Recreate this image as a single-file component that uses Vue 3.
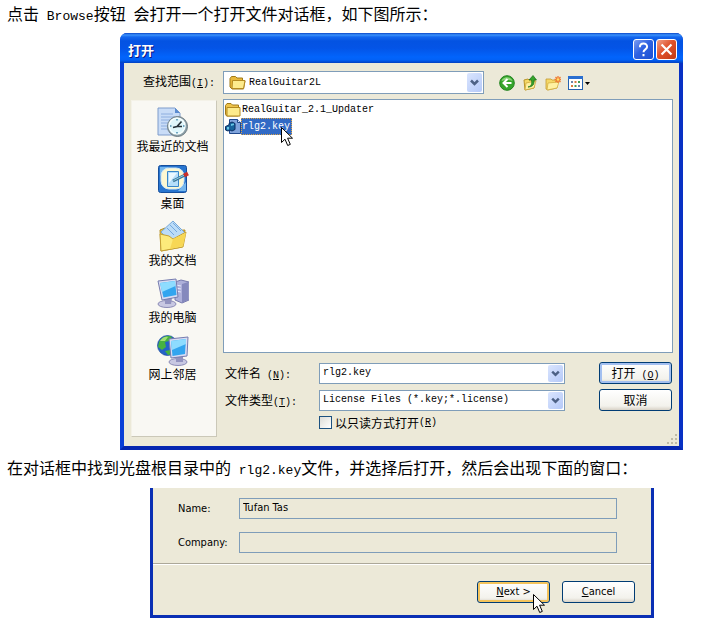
<template>
  <main class="page">
    <p class="note">点击<span class="lat"> Browse</span>按钮<span class="lat">&nbsp;</span>会打开一个打开文件对话框，如下图所示：</p>

    <section class="dialog" aria-label="打开">
      <header class="titlebar">
        <h1>打开</h1>
        <button class="cap help" type="button" aria-label="Help">
          <svg viewBox="0 0 21 21"><path d="M6.500 8c0-5.500 8-5.500 8-.5 0 3-4 2.700-4 6M10.500 15.500v2.500" fill="none" stroke="#fff" stroke-width="2.200" /></svg>
        </button>
        <button class="cap close" type="button" aria-label="Close">
          <svg viewBox="0 0 21 21"><path d="M5 5l11 11M16 5L5 16" stroke="#fff" stroke-width="2.400" /></svg>
        </button>
      </header>

      <div class="body">
        <div class="lookin">
          <label for="folder">查找范围<span class="lat">(<u>I</u>):</span></label>
          <div class="combo look">
            <svg class="folder" viewBox="0 0 17 15">
              <path d="M1 3.500L2.500 1.500h4L8 3h5.500v3H16l-1.500 8H3L1 12z" fill="#e9b93c" stroke="#a17a18" />
              <path d="M3.500 5.500h12.500L14.500 13.500H3z" fill="#fdeb8c" stroke="#b48a20" />
            </svg>
            <select id="folder" v-model="folder">
              <option>RealGuitar2L</option>
            </select>
            <svg class="arrow" viewBox="0 0 15 18"><path d="M4 7l3.500 3.500L11 7" /></svg>
          </div>
          <div class="tools">
            <button type="button" aria-label="Back">
              <svg viewBox="0 0 16 16">
                <circle cx="8" cy="8" r="7.300" fill="#35a52b" stroke="#21821e" />
                <path d="M2.500 6C4 1 12 1 13.500 6 10 4.500 6 4.500 2.500 6z" fill="#8bd579" />
                <path d="M8.500 4L4.500 8l4 4M5 8h7.500" fill="none" stroke="#fff" stroke-width="2" />
              </svg>
            </button>
            <button type="button" aria-label="Up">
              <svg viewBox="0 0 16 16">
                <path d="M2 5l4-1 1 1 6-1-1 9-9 2z" fill="#f5d867" stroke="#b99528" />
                <path d="M4 8l10-2-2 7-9 2z" fill="#fff0a0" stroke="#c7a232" stroke-width=".7" />
                <path d="M6 12c4-1 4-4 3.500-7H7L11 .5 14.500 5H12c.5 4-1 7-6 7z" fill="#35a52b" stroke="#176d18" stroke-width=".7" />
              </svg>
            </button>
            <button type="button" aria-label="New folder">
              <svg viewBox="0 0 16 16">
                <path d="M1 4h5l1 1h5v8l-9 2-2-1z" fill="#f5d867" stroke="#c39b32" stroke-width=".8" />
                <path d="M3 8l11-1-2 6-10 2z" fill="#fff1a2" stroke="#d0a93b" stroke-width=".7" />
                <path d="M13 1v7M9.500 4.500h7M10.500 2l5 5M15.500 2l-5 5" stroke="#f07a30" stroke-width="1.300" />
                <circle cx="13" cy="4.500" r="1.300" fill="#ffe066" />
              </svg>
            </button>
            <button class="views" type="button" aria-label="Views">
              <svg viewBox="0 0 23 16">
                <rect x=".5" y="1.500" width="14" height="13" fill="#fff" stroke="#2462b0" />
                <path d="M0 1h15v3H0z" fill="#2a6fd0" />
                <path d="M3 6h2v2H3zM10 10h2v2h-2z" fill="#6d86a8" />
                <path d="M6.500 6h2v2h-2zM3 10h2v2H3z" fill="#d9793f" />
                <path d="M10 6h2v2h-2zM6.500 10h2v2h-2z" fill="#3e9d54" />
                <path d="M17 7h5l-2.500 3z" fill="#000" />
              </svg>
            </button>
          </div>
        </div>

        <div class="columns">
          <nav class="places">
            <button v-for="p in places" :key="p.id" type="button">
              <svg viewBox="0 0 32 32">
                <template v-if="p.id === 'recent'">
                  <path d="M1 2h17l5 5v22H1z" fill="#c9dcf7" stroke="#7e9ccb" />
                  <path d="M18 2v5h5z" fill="#5b8bd0" />
                  <path d="M4 8h12M4 11h14M4 14h9M4 17h8M4 20h7M4 23h8" stroke="#8eaedf" />
                  <circle cx="20.500" cy="20.500" r="10" fill="#8ba0a8" stroke="#6d7b82" />
                  <circle cx="20" cy="20" r="8" fill="#dff6fb" stroke="#f8ffff" stroke-width="1.500" />
                  <path d="M20 13v1.500M20 26v1.500M13 20h1.500M26 20h1.500" stroke="#4a8cae" stroke-width="1.500" />
                  <path d="M16 21.500l4-1 4.500-5M20 20.500h5" fill="none" stroke="#26333b" stroke-width="1.600" />
                </template>
                <template v-else-if="p.id === 'desktop'">
                  <rect x="1.500" y="2.500" width="28" height="27" rx="2" fill="#2875cf" stroke="#164f9c" />
                  <path d="M3 4h9l-9 9zM29 19v9h-8z" fill="#75b7ee" />
                  <rect x="4" y="5" width="23" height="21" rx="8" fill="#fdf8d2" stroke="#d2e8f5" />
                  <path d="M10.500 8.500h11v15h-11z" fill="#b5defa" stroke="#3986c9" />
                  <path d="M12 10h8l-8 10z" fill="#eaf8ff" />
                  <path d="M16 18l12-6" stroke="#3e7597" stroke-width="3" />
                  <path d="M16.500 17.500l11-5.500" stroke="#88cbe3" />
                  <path d="M27 12.500l4-2" stroke="#c92f28" stroke-width="4" />
                </template>
                <template v-else-if="p.id === 'docs'">
                  <path d="M3 10l5-2 3 3 17-1-3 17-21 4z" fill="#edc543" stroke="#b48f27" />
                  <path d="M4 12L16 1l12 12-11 12z" fill="#bbdcf7" stroke="#77a8d8" />
                  <path d="M13 5l7 7M10 8l7 7M16 3l8 8" stroke="#73a7df" />
                  <path d="M3 14l9 2 4 3 13-7-3 15-22 4z" fill="#fcea7b" stroke="#c5a034" />
                  <path d="M16 19l-3 10 13-3 3-13z" fill="#f7d755" />
                </template>
                <template v-else-if="p.id === 'computer'">
                  <path d="M18 5l6-2 8 2v18l-7 3-7-3z" fill="#aeb0da" stroke="#777aad" />
                  <path d="M25 7l6-2v18l-6 3z" fill="#8589bd" />
                  <path d="M19 8l5 1M19 11l5 1M19 14l5 1" stroke="#e6e7fa" />
                  <ellipse cx="10" cy="27" rx="9" ry="3.500" fill="#c8c8e2" stroke="#8b8bb6" />
                  <path d="M8 21h7l-1 6H8z" fill="#9293bf" />
                  <path d="M1 4l18-2 2 18-16 3z" fill="#d8dcf3" stroke="#767caf" />
                  <path d="M3 6l15-2 1.500 14-13 2.500z" fill="#33a5ef" />
                  <path d="M3 6l15-2 .5 5L5 15z" fill="#8edcff" />
                </template>
                <template v-else>
                  <circle cx="10.500" cy="11.500" r="10" fill="#2463c7" stroke="#17479c" stroke-width=".7" />
                  <path d="M2 8c3-6 10-7 13-5l-3 4-4 1 1 5-4 3-4-3zM8 17l5-1 2 4-4 1z" fill="#47b33e" />
                  <path d="M3 7c2-4 6-5 8-4L8 7z" fill="#a3df74" />
                  <ellipse cx="21" cy="28" rx="9" ry="3.500" fill="#c8c8e2" stroke="#8b8bb6" />
                  <path d="M19 22h7v6h-7z" fill="#9293bf" />
                  <path d="M12 5l19-2-1 19-16 2z" fill="#d8dcf3" stroke="#767caf" />
                  <path d="M14 7l15-2-1 15-12.500 2z" fill="#33a5ef" />
                  <path d="M14 7l15-2v5l-14 6z" fill="#8edcff" />
                </template>
              </svg>
              <span>{{ p.label }}</span>
            </button>
          </nav>

          <div class="files">
            <ul class="list">
              <li v-for="f in files" :key="f.name">
                <button type="button" :class="{ selected: f.name === fileName }" @click="fileName = f.name">
                  <svg v-if="f.dir" viewBox="0 0 16 15">
                    <path d="M.5 3.500L2 1.500h4L7.500 3h6v11h-12L.5 12z" fill="#eec34a" stroke="#a17a18" />
                    <path d="M2 5.500h13v8.500H2z" fill="#fdeb8c" stroke="#b48a20" />
                  </svg>
                  <svg v-else viewBox="0 0 16 15">
                    <path d="M4.500.5h8l3 3v11h-11z" fill="#7fa3dc" stroke="#20498d" />
                    <path d="M12.500.5v3h3" fill="#d8e5fa" stroke="#20498d" />
                    <path d="M.5 7.500L4 6V4.500l3-1.500 3 1.500v6L7 12l-2-1-2 1-2.500-1z" fill="#17639c" stroke="#082e64" />
                    <path d="M2 8h2v2.500H2zM6 5l3-.5V6L6 7z" fill="#67c6e4" />
                  </svg>
                  <span class="lat">{{ f.name }}</span>
                  <svg v-if="f.name === fileName" class="pointer" viewBox="0 0 13 20"><path d="M.5.500v15l3.500-3.300 2.700 6.300 2.600-1.100-2.700-6.200H11.500z" /></svg>
                </button>
              </li>
            </ul>

            <div class="fields">
              <label for="name">文件名<span class="lat"> (<u>N</u>):</span></label>
              <div class="combo">
                <input id="name" v-model="fileName" type="text" />
                <svg class="arrow" viewBox="0 0 15 18"><path d="M4 7l3.500 3.500L11 7" /></svg>
              </div>
              <button class="btn default" type="button">打开<span class="lat"> (<u>O</u>)</span></button>

              <label for="type">文件类型<span class="lat">(<u>T</u>):</span></label>
              <div class="combo">
                <select id="type" v-model="fileType">
                  <option>License Files (*.key;*.license)</option>
                </select>
                <svg class="arrow" viewBox="0 0 15 18"><path d="M4 7l3.500 3.500L11 7" /></svg>
              </div>
              <button class="btn" type="button">取消</button>
            </div>
            <label class="readonly"><input v-model="readOnly" type="checkbox" />以只读方式打开<span class="lat">(<u>R</u>)</span></label>
          </div>
        </div>
        <svg class="grip" viewBox="0 0 12 12"><path d="M9 1h2v2H9zM5 5h2v2H5zM9 5h2v2H9zM1 9h2v2H1zM5 9h2v2H5zM9 9h2v2H9z" /></svg>
      </div>
    </section>

    <p class="note second">在对话框中找到光盘根目录中的<span class="lat"> rlg2.key</span>文件，并选择后打开，然后会出现下面的窗口：</p>

    <section class="wizard">
      <div class="form">
        <label for="user">Name:</label>
        <input id="user" v-model="user" type="text" />
        <label for="company">Company:</label>
        <input id="company" v-model="company" type="text" />
      </div>
      <footer>
        <button class="btn hot" type="button">
          <span><u>N</u>ext &gt;</span>
          <svg class="pointer" viewBox="0 0 13 20"><path d="M.5.500v15l3.500-3.300 2.700 6.300 2.600-1.100-2.700-6.200H11.500z" /></svg>
        </button>
        <button class="btn" type="button"><span><u>C</u>ancel</span></button>
      </footer>
    </section>
  </main>
</template>

<script setup>
import { ref } from 'vue';

const folder = ref('RealGuitar2L');
const fileName = ref('rlg2.key');
const fileType = ref('License Files (*.key;*.license)');
const readOnly = ref(false);
const user = ref('Tufan Tas');
const company = ref('');

const places = [
  { id: 'recent', label: '我最近的文档' },
  { id: 'desktop', label: '桌面' },
  { id: 'docs', label: '我的文档' },
  { id: 'computer', label: '我的电脑' },
  { id: 'network', label: '网上邻居' },
];

const files = [
  { name: 'RealGuitar_2.1_Updater', dir: true },
  { name: 'rlg2.key', dir: false },
];
</script>

<style>
body {
  margin: 0;
  background: #fff;
}
</style>

<style scoped>
* {
  box-sizing: border-box;
}
.page {
  padding: 3px 0;
  color: #000;
  font: 12px/16px "Noto Sans CJK SC", sans-serif;
}
button,
input,
select {
  margin: 0;
  padding: 0;
  border: 0;
  border-radius: 0;
  background: none;
  color: inherit;
  font: inherit;
}
svg {
  display: block;
  flex: none;
}
u {
  text-underline-offset: 1px;
}
.lat {
  font-family: "Liberation Mono", monospace;
  font-size: 10px;
  line-height: 1;
  white-space: pre;
}
.note {
  margin: 0 7px 10px;
  font: 16px/20px "Noto Sans CJK SC", sans-serif;
  white-space: nowrap;
}
.note .lat {
  font-size: 13px;
}
.second {
  margin: 7px 7px 11px;
}

/* 打开 */
.dialog {
  min-width: 520px;
  margin: 0 35px 0 120px;
  border: 4px solid #0a3fd6;
  border-top: 0;
  border-right-color: #0831c4;
  border-bottom-color: #0526b0;
  border-radius: 7px 7px 0 0;
  background: #0a3fd6;
}
.titlebar {
  display: flex;
  align-items: center;
  gap: 2px;
  height: 30px;
  margin: 0 -4px;
  padding: 3px 6px 0 8px;
  border-radius: 7px 7px 0 0;
  background: linear-gradient(#0a46c8 0, #3b92fb 2px, #1467ee 4px, #0453e2 8px, #0454e6 15px, #0264fc 24px, #0261f6 27px, #0340c0 30px);
}
.titlebar h1 {
  flex: 1;
  margin: 0;
  color: #fff;
  font: bold 13px/20px "Noto Sans CJK SC", sans-serif;
  text-shadow: 1px 1px #0a1883;
}
.cap {
  width: 21px;
  height: 21px;
  border: 1px solid #fff;
  border-radius: 3px;
}
.cap svg {
  width: 19px;
  height: 19px;
}
.help {
  background: linear-gradient(135deg, #7c9cf0, #2f62e2 45%, #1c4fd0);
}
.close {
  background: linear-gradient(135deg, #f0a088, #e0522c 45%, #c23a14);
}
.body {
  position: relative;
  padding: 8px 6px 9px 7px;
  background: #ece9d8;
}
.lookin {
  display: flex;
  align-items: center;
  height: 23px;
  margin-bottom: 5px;
  padding-left: 12px;
}
.lookin label {
  width: 80px;
  padding-bottom: 4px;
}
.combo {
  position: relative;
  display: flex;
  height: 21px;
  border: 1px solid #7f9db9;
  background: #fff;
}
.combo input,
.combo select {
  flex: 1;
  min-width: 0;
  padding: 0 20px 0 3px;
  appearance: none;
  outline: 0;
  font: 10px/18px "Liberation Mono", monospace;
}
.look {
  flex: 0 1 261px;
  height: 23px;
}
.look select {
  padding-left: 25px;
}
.folder {
  position: absolute;
  top: 3px;
  left: 5px;
  width: 17px;
  height: 15px;
}
.arrow {
  position: absolute;
  top: 1px;
  right: 1px;
  width: 15px;
  height: calc(100% - 2px);
  border-radius: 2px;
  background: linear-gradient(135deg, #dae5fe, #b5c9f8);
  pointer-events: none;
}
.arrow path {
  fill: none;
  stroke: #4d6185;
  stroke-width: 2.5;
}
.tools {
  display: flex;
  gap: 7px;
  margin-left: 15px;
}
.tools svg {
  width: 16px;
  height: 16px;
}
.tools .views svg {
  width: 23px;
}
.columns {
  display: flex;
  gap: 6px;
}
.places {
  display: flex;
  flex: none;
  flex-direction: column;
  gap: 9px;
  width: 86px;
  margin-top: 1px;
  padding: 5px 3px 0 0;
  border: 1px solid #f4f2e8;
  border-right-color: #cbc8b8;
  border-bottom-color: #cbc8b8;
  background: #f9f8f3;
}
.places button {
  display: flex;
  flex-direction: column;
  align-items: center;
  white-space: nowrap;
}
.places svg {
  width: 32px;
  height: 32px;
}
.files {
  flex: 1;
  min-width: 0;
  padding-bottom: 7px;
}
.list {
  min-height: 254px;
  margin: 0 0 9px;
  padding: 1px;
  border: 1px solid #7f9db9;
  background: #fff;
  list-style: none;
}
.list button {
  position: relative;
  display: flex;
  align-items: center;
  height: 17px;
}
.list button > svg {
  width: 16px;
  height: 15px;
}
.list .lat {
  padding: 0 1px;
  line-height: 17px;
}
.list .selected .lat {
  padding-right: 2px;
  outline: 1px dotted #d9a24a;
  outline-offset: -1px;
  background: #316ac5;
  color: #fff;
}
.pointer path {
  fill: #fff;
  stroke: #000;
}
.list button .pointer {
  position: absolute;
  z-index: 1;
  top: 9px;
  left: 56px;
  width: 13px;
  height: 20px;
}
.fields {
  display: grid;
  grid-template-columns: 94px 1fr 73px;
  gap: 5px 0;
  align-items: center;
  padding: 0 1px 0 2px;
}
.fields .combo {
  margin-right: 34px;
}
.btn {
  position: relative;
  height: 22px;
  border: 1px solid #003c74;
  border-radius: 3px;
  background: linear-gradient(#fff, #f3f2ec 80%, #d8d2c6);
}
.default {
  box-shadow: inset 0 0 0 2px #a3bff0;
}
.readonly {
  display: flex;
  align-items: center;
  height: 15px;
  margin: 4px 0 0 96px;
}
.readonly input {
  width: 13px;
  height: 13px;
  margin-right: 3px;
  border: 1px solid #1c5180;
  appearance: none;
  background: linear-gradient(135deg, #dcdcd7, #fff);
}
.readonly input:checked {
  background: #21a121;
}
.grip {
  position: absolute;
  right: 1px;
  bottom: 1px;
  width: 12px;
  height: 12px;
  fill: #bfbba6;
}

.wizard {
  min-width: 400px;
  margin: 0 64px 0 150px;
  border: solid #0a2fb4;
  border-width: 0 3px 3px;
  background: #ece9d8;
  font: 11px/14px "DejaVu Sans Condensed", "DejaVu Sans", sans-serif;
}
.form {
  display: grid;
  grid-template-columns: 61px 1fr;
  gap: 13px 0;
  align-items: center;
  padding: 10px 34px 10px 25px;
  border-bottom: 1px solid #aca899;
}
.form input {
  min-width: 0;
  height: 21px;
  padding: 0 3px 2px;
  border: 1px solid #7f9db9;
  outline: 0;
}
.wizard footer {
  display: flex;
  justify-content: flex-end;
  gap: 12px;
  padding: 16px 16px 12px;
  border-top: 1px solid #fff;
}
.wizard .btn {
  width: 73px;
}
.hot {
  box-shadow: inset 0 0 0 2px #f4c45c;
}
.btn .pointer {
  position: absolute;
  top: 12px;
  left: 55px;
  width: 13px;
  height: 20px;
}
</style>
